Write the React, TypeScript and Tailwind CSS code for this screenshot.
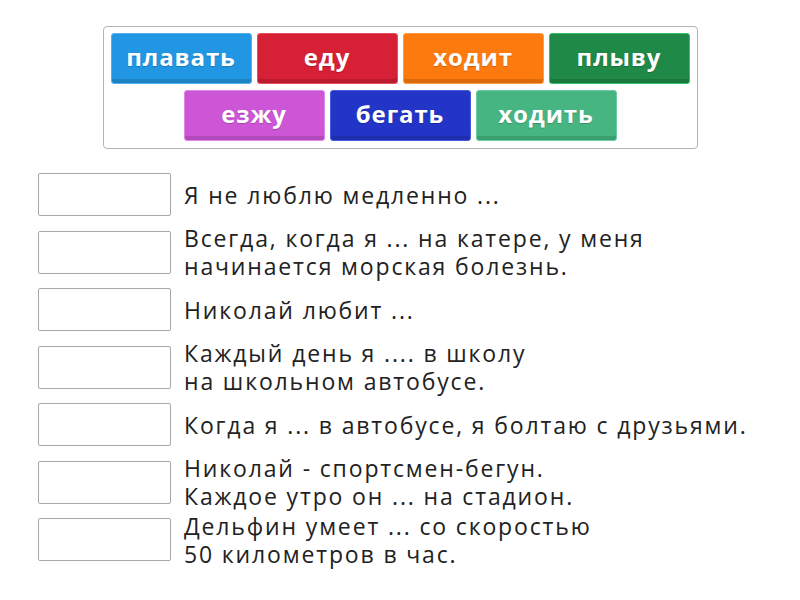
const words = [
  { text: 'плавать', bg: 'bg-[#2196e2]', border: 'border-[#52b1ee]' },
  { text: 'еду', bg: 'bg-[#d71f35]', border: 'border-[#e4505f]' },
  { text: 'ходит', bg: 'bg-[#fd7a0e]', border: 'border-[#ff9a45]' },
  { text: 'плыву', bg: 'bg-[#1f8a47]', border: 'border-[#34bf68]' },
  { text: 'езжу', bg: 'bg-[#cd56d7]', border: 'border-[#df86e6]' },
  { text: 'бегать', bg: 'bg-[#2335c7]', border: 'border-[#4b5be0]' },
  { text: 'ходить', bg: 'bg-[#46b582]', border: 'border-[#6bcb9f]' },
];

const prompts = [
  ['Я не люблю медленно ...'],
  ['Всегда, когда я ... на катере, у меня', 'начинается морская болезнь.'],
  ['Николай любит ...'],
  ['Каждый день я .... в школу', 'на школьном автобусе.'],
  ['Когда я ... в автобусе, я болтаю с друзьями.'],
  ['Николай - спортсмен-бегун.', 'Каждое утро он ... на стадион.'],
  ['Дельфин умеет ... со скоростью', '50 километров в час.'],
];

function WordTile({ text, bg, border }: { text: string; bg: string; border: string }) {
  return (
    <div
      className={`w-[141px] h-[51px] flex items-center justify-center rounded-[3px] border ${bg} ${border} shadow-[inset_0_-4px_0_rgba(0,0,0,0.13)] text-white font-bold text-[24px] tracking-[0.9px] pb-[3px] [text-shadow:0_1px_1px_rgba(0,0,0,0.2)]`}
    >
      {text}
    </div>
  );
}

export default function App() {
  return (
    <div className="w-[800px] h-[600px] bg-white font-['Open_Sans',sans-serif] text-[#222]">
      <div className="pt-[26px] flex justify-center">
        <div className="w-[595px] border border-[#b4b4b4] rounded-[4px] pt-[6px] px-[6px] pb-[7px] flex flex-wrap justify-center gap-x-[5px] gap-y-[6px]">
          {words.map((w) => (
            <WordTile key={w.text} {...w} />
          ))}
        </div>
      </div>
      <div className="mt-[24px] pl-[38px] flex flex-col gap-[14.5px]">
        {prompts.map((lines, i) => (
          <div key={i} className="h-[43px] flex items-center">
            <div className="w-[133px] h-[43px] border border-[#a8a8a8] rounded-[2px] bg-white shrink-0" />
            <div className="ml-[13px] text-[23px] tracking-[1.85px] leading-[28px] whitespace-nowrap">
              {lines.map((l) => (
                <div key={l}>{l}</div>
              ))}
            </div>
          </div>
        ))}
      </div>
    </div>
  );
}
